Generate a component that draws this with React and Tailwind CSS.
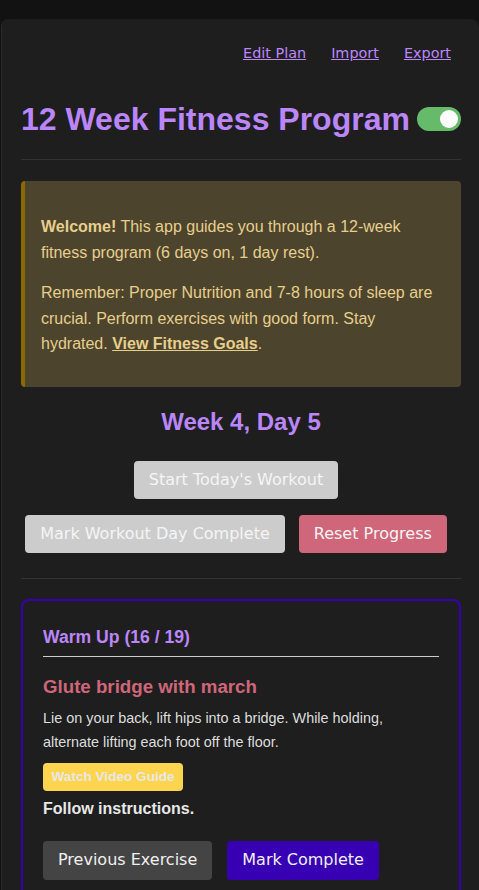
import { useState } from 'react';

const sans = { fontFamily: '"Liberation Sans", Arial, sans-serif' };
const deja = { fontFamily: '"DejaVu Sans", sans-serif' };

const btnBase =
  'rounded-[4px] px-[15px] py-[10px] text-[16px] leading-[18px] text-[#f5f5f5]';

function Toggle({ on, onChange }) {
  return (
    <button
      type="button"
      onClick={() => onChange(!on)}
      className={`flex h-[24px] w-[44px] shrink-0 items-center rounded-full px-[3px] ${
        on ? 'justify-end bg-[#66bb6a]' : 'justify-start bg-[#555]'
      }`}
    >
      <span className="block h-[18px] w-[18px] rounded-full bg-white" />
    </button>
  );
}

export default function App() {
  const [dark, setDark] = useState(true);

  return (
    <div className="min-h-[890px] bg-[#121212] pt-[19px] pl-px" style={sans}>
      <div className="min-h-[871px] rounded-t-[8px] border-l border-[#2a2a2a] bg-[#1e1e1e] pl-[19px] pr-[18px] pt-[20px] text-[#e0e0e0]">
        {/* top links */}
        <nav className="flex h-[30px] items-center justify-end gap-[25px] pr-[10px] text-[14.4px]" style={deja}>
          <a href="#" className="text-[#bb86fc] underline">Edit Plan</a>
          <a href="#" className="text-[#bb86fc] underline">Import</a>
          <a href="#" className="text-[#bb86fc] underline">Export</a>
        </nav>

        {/* title */}
        <header className="mt-[31px] flex items-center justify-between border-b border-[#333] pb-[21px]">
          <h1 className="text-[32px] font-bold leading-[38px] text-[#bb86fc]">12 Week Fitness Program</h1>
          <Toggle on={dark} onChange={setDark} />
        </header>

        {/* welcome */}
        <section className="mt-[21px] rounded-[4px] border-l-4 border-[#8a6a00] bg-[#4d442e] pt-[17px] pb-[14px] pl-[16px] pr-[16px] text-[16px] leading-[25.6px] text-[#e6cf8b]">
          <p className="my-[16px] mb-[15px]">
            <strong>Welcome!</strong> This app guides you through a 12-week fitness program (6 days on, 1 day rest).
          </p>
          <p className="mb-[16px]">
            Remember: Proper Nutrition and 7-8 hours of sleep are crucial. Perform exercises with good form. Stay
            hydrated.{' '}
            <a href="#" className="font-bold underline">View Fitness Goals</a>.
          </p>
        </section>

        {/* day */}
        <h2 className="mt-[20px] text-center text-[24px] font-bold leading-[30px] text-[#bb86fc]">Week 4, Day 5</h2>

        <div className="mt-[24px] flex flex-col gap-[16px]" style={deja}>
          <div className="flex justify-center">
            <button type="button" className={`${btnBase} mr-[10px] bg-[#cccccc]`}>Start Today's Workout</button>
          </div>
          <div className="flex justify-center gap-[4px]">
            <button type="button" className={`${btnBase} mr-[10px] bg-[#cccccc]`}>Mark Workout Day Complete</button>
            <button type="button" className={`${btnBase} mr-[10px] bg-[#cf6679]`}>Reset Progress</button>
          </div>
        </div>

        <hr className="mt-[25px] border-[#333]" />

        {/* exercise card */}
        <section className="mt-[20px] rounded-[8px] border-2 border-[#3700b3] px-[20px] pt-[21px] pb-[20px]">
          <h3 className="border-b border-[#cccccc] pb-[4px] text-[17.6px] font-bold leading-[30px] text-[#bb86fc]">
            Warm Up (16 / 19)
          </h3>
          <h4 className="mt-[18px] text-[18.7px] font-bold leading-[24px] text-[#cf6679]">Glute bridge with march</h4>
          <p className="mt-[7px] text-[14.4px] leading-[24px] text-[#dddddd]">
            Lie on your back, lift hips into a bridge. While holding, alternate lifting each foot off the floor.
          </p>
          <button
            type="button"
            className="mt-[9px] block h-[28px] rounded-[4px] bg-[#ffd54f] px-[8.5px] text-[13.6px] font-bold text-[#e8e8e8]"
          >
            Watch Video Guide
          </button>
          <p className="mt-[8px] text-[16px] font-bold leading-[20px] text-[#e8e8e8]">Follow instructions.</p>
          <div className="mt-[22px] flex gap-[5px]" style={deja}>
            <button type="button" className="mr-[10px] h-[39px] rounded-[4px] bg-[#444444] px-[15px] text-[16px] text-[#f0f0f0]">
              Previous Exercise
            </button>
            <button type="button" className="mr-[10px] h-[39px] rounded-[4px] bg-[#3700b3] px-[15px] text-[16px] text-[#f0f0f0]">
              Mark Complete
            </button>
          </div>
        </section>
      </div>
    </div>
  );
}
